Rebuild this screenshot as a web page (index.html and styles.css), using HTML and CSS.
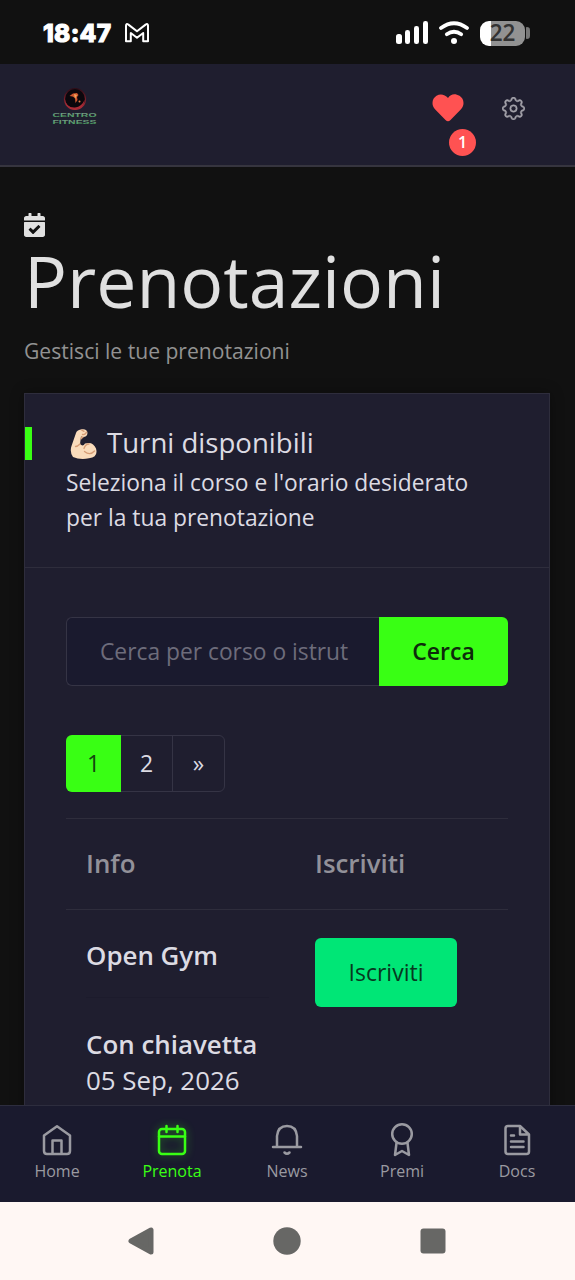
FILE: index.html
```html
<!DOCTYPE html>
<html lang="it">
<head>
<meta charset="utf-8">
<title>Prenotazioni</title>
<link rel="stylesheet" href="styles.css">
</head>
<body>
<div class="screen">
  <div class="status">
    <span class="clock">18:47</span>
    <svg class="gmail" width="26" height="22" viewBox="0 0 26 22"><path d="M2 19.200V3.800Q2 1.200 4.400 2.600L13 9.300 21.600 2.600Q24 1.200 24 3.800V19.200H19.200V11L13 15.800 6.800 11V19.200Z" fill="none" stroke="#fff" stroke-width="2" stroke-linejoin="round"/></svg>
    <svg class="signal" width="34" height="24" viewBox="0 0 34 24" fill="#fff"><rect x="0" y="13" width="6" height="10" rx="2.500"/><rect x="9" y="9" width="5" height="14" rx="2.300"/><rect x="18" y="5" width="5" height="18" rx="2.300"/><rect x="27" y="0" width="5" height="23" rx="2.300"/></svg>
    <svg class="wifi" width="32" height="24" viewBox="0 0 32 24"><g fill="none" stroke="#fff" stroke-width="3.800" stroke-linecap="round"><path d="M3 7Q16-2.500 29 7"/><path d="M8.800 13.200Q16 8.200 23.200 13.200"/></g><circle cx="16" cy="20" r="3" fill="#fff"/></svg>
    <div class="battery"><span class="battery-body">22</span><span class="battery-tip"></span></div>
  </div>

  <header class="topbar">
    <svg class="logo" width="50" height="40" viewBox="0 0 50 40">
      <defs>
        <linearGradient id="g" x1="0" y1="0" x2="0" y2="1"><stop offset=".3" stop-color="#6f9a80"/><stop offset="1" stop-color="#41a659"/></linearGradient>
        <linearGradient id="r" x1="0" y1="0" x2="0" y2="1"><stop offset="0" stop-color="#300d18"/><stop offset="1" stop-color="#b52f3b"/></linearGradient>
      </defs>
      <circle cx="25" cy="12" r="10.500" fill="#0b070c" stroke="url(#r)" stroke-width="1.200"/>
      <path d="M14.500 11Q16 21 25 20.500Q32 19.500 34.500 13Q34 22 25 22.500Q15 22 14.500 11Z" fill="#a92c36"/>
      <path d="M19.500 9L23 6.500 27 6 28.500 8 27 10 27.500 13 25.500 16 25 11 22.500 9.500Z" fill="#cf572e"/>
      <path d="M24 7l3 1-2 4z" fill="#f0a65b"/><circle cx="29.500" cy="14.500" r="1" fill="#e27a45"/>
      <g class="logo-text" fill="url(#g)">
        <text x="2.500" y="29.800" textLength="44" lengthAdjust="spacingAndGlyphs">CENTRO</text>
        <text x="2.500" y="36.800" textLength="44" lengthAdjust="spacingAndGlyphs">FITNESS</text>
      </g>
    </svg>
    <div class="hearts">
      <svg width="32" height="28" viewBox="0 0 32 28"><path d="M16 27.300Q14.800 27.300 13.500 26L3 15.300C-1 11 0 4.500 4.500 1.800 8.500-.5 13 .7 16 4 19-.7 23.500-.5 27.500 1.800 32 4.500 33 11 29 15.300L18.500 26Q17.200 27.300 16 27.300Z" fill="#ff5252"/></svg>
      <span class="badge">1</span>
    </div>
    <svg class="gear" width="23" height="23" viewBox="0 0 16 16" fill="#a2a1a9" stroke="#a2a1a9" stroke-width=".35"><path d="M8 5.400a2.600 2.600 0 1 0 0 5.200 2.600 2.600 0 0 0 0-5.200M6.300 8a1.700 1.700 0 1 1 3.400 0 1.700 1.700 0 0 1-3.400 0"/><path d="M9.796 1.343c-.527-1.790-3.065-1.790-3.592 0l-.094.319a.873.873 0 0 1-1.255.520l-.292-.160c-1.640-.892-3.433.902-2.540 2.541l.159.292a.873.873 0 0 1-.520 1.255l-.319.094c-1.790.527-1.790 3.065 0 3.592l.319.094a.873.873 0 0 1 .520 1.255l-.160.292c-.892 1.640.901 3.434 2.541 2.540l.292-.159a.873.873 0 0 1 1.255.520l.094.319c.527 1.790 3.065 1.790 3.592 0l.094-.319a.873.873 0 0 1 1.255-.520l.292.160c1.640.893 3.434-.902 2.540-2.541l-.159-.292a.873.873 0 0 1 .520-1.255l.319-.094c1.790-.527 1.790-3.065 0-3.592l-.319-.094a.873.873 0 0 1-.520-1.255l.160-.292c.893-1.640-.902-3.433-2.541-2.540l-.292.159a.873.873 0 0 1-1.255-.520zm-2.633.283c.246-.835 1.428-.835 1.674 0l.094.319a1.873 1.873 0 0 0 2.693 1.115l.291-.160c.764-.415 1.600.420 1.184 1.185l-.159.292a1.873 1.873 0 0 0 1.116 2.692l.318.094c.835.246.835 1.428 0 1.674l-.319.094a1.873 1.873 0 0 0-1.115 2.693l.160.291c.415.764-.420 1.600-1.185 1.184l-.291-.159a1.873 1.873 0 0 0-2.693 1.116l-.094.318c-.246.835-1.428.835-1.674 0l-.094-.319a1.873 1.873 0 0 0-2.692-1.115l-.292.160c-.764.415-1.600-.420-1.184-1.185l.159-.291A1.873 1.873 0 0 0 1.945 8.930l-.319-.094c-.835-.246-.835-1.428 0-1.674l.319-.094A1.873 1.873 0 0 0 3.060 4.377l-.160-.292c-.415-.764.420-1.600 1.185-1.184l.292.159a1.873 1.873 0 0 0 2.692-1.115z"/></svg>
  </header>

  <main class="content">
    <svg class="title-icon" width="21" height="24" viewBox="0 0 448 512" preserveAspectRatio="none" fill="#e0e0e0"><path d="M436 160H12c-6.600 0-12-5.400-12-12v-36c0-26.500 21.500-48 48-48h48V12c0-6.600 5.400-12 12-12h40c6.600 0 12 5.400 12 12v52h128V12c0-6.600 5.400-12 12-12h40c6.600 0 12 5.400 12 12v52h48c26.500 0 48 21.500 48 48v36c0 6.600-5.400 12-12 12zM12 192h424c6.600 0 12 5.400 12 12v260c0 26.500-21.500 48-48 48H48c-26.500 0-48-21.500-48-48V204c0-6.600 5.400-12 12-12zm333.300 95.900l-28.200-28.400c-4.700-4.700-12.300-4.700-17-.1l-106 105.200-46-46.400c-4.700-4.700-12.300-4.700-17-.1l-28.400 28.200c-4.700 4.700-4.700 12.300-.1 17l82.600 83.300c4.700 4.700 12.300 4.700 17 .1l142.900-141.800c4.700-4.700 4.700-12.300.1-17z"/></svg>
    <h1 class="title">Prenotazioni</h1>
    <p class="subtitle">Gestisci le tue prenotazioni</p>

    <section class="card">
      <div class="card-head">
        <h2 class="card-title">
          <svg width="27" height="30" viewBox="0 0 27 30"><path d="M3 28Q-.5 23 1.500 17L6 4Q7 1 12 .3 17-.3 17.500 4 17.300 8 13 8L11 7.500 10 15Q13 18 15 14.500 23 12 26 19.500 28.500 28 19 29.300 10 31 3 28Z" fill="#fadcbc"/><path d="M10 15Q7.500 17.500 5.500 17.500M11.500 1L14 2.300M12.500 5.500Q15.500 6 16.500 3M14 19.500Q15.500 15 19 15M14.500 22.500Q20 27 24.500 22" fill="none" stroke="#d69d76" stroke-width="1.300" stroke-linecap="round"/><path d="M11 7.500L14 8 10.700 11Z" fill="#d69d76"/></svg>
          <span>Turni disponibili</span>
        </h2>
        <p class="card-text">Seleziona il corso e l'orario desiderato<br>per la tua prenotazione</p>
      </div>
      <div class="card-body">
        <div class="search">
          <div class="search-field"><span>Cerca per corso o istrut</span></div>
          <button class="search-btn"><span>Cerca</span></button>
        </div>
        <div class="pages"><span class="page active">1</span><span class="page two">2</span><span class="page next">»</span></div>
        <div class="table">
          <div class="row head"><span class="col">Info</span><span class="col">Iscriviti</span></div>
          <div class="row">
            <div class="col info">
              <strong class="line">Open Gym</strong>
              <hr class="rule">
              <strong class="line">Con chiavetta</strong>
              <span class="line">05 Sep, 2026</span>
            </div>
            <div class="col"><button class="join">Iscriviti</button></div>
          </div>
        </div>
      </div>
    </section>
  </main>

  <nav class="tabs">
    <a class="tab"><svg class="ico" viewBox="0 0 32 32"><path d="M3 11.500L16 2.200 29 11.500V27Q29 30 26 30H6Q3 30 3 27ZM11.500 30V16.500H20.500V30"/></svg><span>Home</span></a>
    <a class="tab on"><svg class="ico" viewBox="0 0 32 32"><rect x="3" y="5" width="26" height="25" rx="3"/><path d="M3 12.500H29M10.500 2V8M21.500 2V8"/></svg><span>Prenota</span></a>
    <a class="tab"><svg class="ico" viewBox="0 0 32 32"><path d="M2 23H30M6 23V12Q7 2 16 2T26 12V23M13.500 28.500Q16 31 18.500 28.500"/></svg><span>News</span></a>
    <a class="tab"><svg class="ico" viewBox="0 0 32 32"><circle cx="16" cy="10" r="9.800"/><path d="M10.500 19L9 31 16 27 23 31 21.500 19"/></svg><span>Premi</span></a>
    <a class="tab"><svg class="ico" viewBox="0 0 32 32"><path d="M19 2H7Q4.500 2 4.500 4.500V27.500Q4.500 30 7 30H25.500Q28 30 28 27.500V10.500ZM19 2V10.500H28M10 11.500H13M10 17.500H22.500M10 23H22.500"/></svg><span>Docs</span></a>
  </nav>

  <div class="sysbar">
    <svg width="28" height="30" viewBox="0 0 28 30"><path d="M4 15L24 4V26Z" fill="#676765" stroke="#676765" stroke-width="5" stroke-linejoin="round"/></svg>
    <svg width="28" height="28" viewBox="0 0 28 28"><circle cx="14" cy="14" r="13.700" fill="#676765"/></svg>
    <svg width="28" height="28" viewBox="0 0 28 28"><rect x="1.500" y="1.500" width="25" height="25" rx="3" fill="#676765"/></svg>
  </div>
</div>
</body>
</html>
```
FILE: styles.css
```css
* { box-sizing: border-box; }
body { margin: 0; background: #111; color: #dcdbe3; font-family: "Open Sans", "Noto Sans", sans-serif; }
h1, h2, p { margin: 0; font-weight: 400; }
svg { display: block; flex: none; }
button { border: 0; padding: 0; font: inherit; }
.screen { width: 575px; height: 1280px; display: flex; flex-direction: column; overflow: hidden; white-space: nowrap; }

.status { height: 64px; flex: none; display: flex; align-items: center; padding: 2px 45px 0 43px; background: #111; }
.clock { width: 69px; font: 800 24.500px/30px Inter, sans-serif; color: #fff; -webkit-text-stroke: 1px #fff; letter-spacing: .3px; }
.gmail { margin-left: 12px; }
.signal { margin-left: auto; }
.wifi { margin-left: 8px; }
.battery { display: flex; align-items: center; gap: 1px; margin-left: 10px; }
.battery-body { width: 45px; height: 25px; border-radius: 9px; background: linear-gradient(90deg, #fff 11px, #929292 11px); color: #333; font: 600 22.500px/23px "Open Sans", sans-serif; text-align: center; }
.battery-tip { width: 4px; height: 12px; border-radius: 1px 4px 4px 1px; background: #777; }

.topbar { height: 103px; flex: none; display: flex; align-items: flex-start; padding: 0 50px; background: #1f1e2f; border-bottom: 2px solid #36353f; }
.logo { margin-top: 23px; }
.logo-text { font: 700 6px "Liberation Sans", sans-serif; }
.hearts { margin: 30px 0 0 auto; width: 44px; }
.badge { display: block; width: 27px; height: 27px; margin: 7px 0 0 17px; border-radius: 50%; background: #ff5252; color: #fff; font-size: 16px; font-weight: 600; line-height: 27px; text-align: center; }
.gear { margin: 32.500px .5px 0 25.500px; }

.content { flex: 1; min-height: 0; overflow: hidden; padding: 46px 25px 0 24px; }
.title { margin-top: 1px; height: 86px; font-size: 71.500px; line-height: 86px; color: #e0e0e0; }
.subtitle { margin-top: 10px; height: 33px; font-size: 21.100px; line-height: 33px; color: #929292; }
.card { margin-top: 26px; border: 1px solid #2e2d3c; background: #1f1e2f; height: 900px; box-shadow: 0 0 12px rgba(0, 0, 0, .35); }
.card-head { height: 174px; border-bottom: 1px solid #2e2d3c; padding-top: 33px; }
.card-title { display: flex; align-items: center; height: 33px; border-left: 7px solid #39ff14; padding-left: 38px; font-size: 27.600px; line-height: 33px; }
.card-title span { margin: -2px 0 0 10px; }
.card-text { margin-top: 6px; padding-left: 41px; font-size: 22.800px; line-height: 34.500px; }
.card-body { padding: 50px 41px 0; margin-top: -1px; }

.search { display: flex; height: 69px; }
.search-field { width: 313px; border: 1px solid #353445; border-right: 0; border-radius: 6px 0 0 6px; background: #1a1a2e; padding-left: 33px; color: #6d6c7b; font-size: 22.800px; line-height: 68px; }
.search-btn { flex: 1; border-radius: 0 6px 6px 0; background: #39ff14; color: #0d2b0b; font-size: 23px; font-weight: 600; padding-bottom: 2px; }
.pages { display: flex; width: 159px; height: 57px; margin-top: 49px; border-radius: 6px; border: 1px solid #353445; font-size: 23px; line-height: 54px; text-align: center; color: #dcdbe3; }
.page.active { width: 55px; margin: -1px 0 -1px -1px; border-radius: 6px 0 0 6px; background: #39ff14; color: #14440f; line-height: 56px; }
.page.two { width: 52px; border-right: 1px solid #353445; }
.page.next { flex: 1; }

.table { margin-top: 26px; border-top: 1px solid #2e2d3c; font-size: 25.900px; line-height: 36px; }
.row { display: grid; grid-template-columns: 229px 1fr; padding: 28px 0 0 20px; }
.row.head { height: 91px; padding-top: 26px; border-bottom: 1px solid #2e2d3c; color: #929199; font-weight: 600; }
.info { display: flex; flex-direction: column; align-items: flex-start; }
.info .line { height: 36px; margin-top: -1px; margin-bottom: 1px; }
strong { font-weight: 600; }
.rule { width: 183px; height: 1px; margin: 23px 0 29px; border: 0; background: #1c1b2c; }
.join { width: 142px; height: 69px; border-radius: 6px; background: #00e676; color: #07391f; font-size: 23px; padding-bottom: 2px; }

.tabs { height: 97px; flex: none; display: grid; grid-template-columns: repeat(5, 1fr); border-top: 1px solid #2d2d3e; background: #1a1a2e; }
.tab { display: flex; flex-direction: column; align-items: center; padding: 18px 1px 0 0; color: #9a9aa1; font-size: 16px; line-height: 24px; }
.tab span { margin-top: 3px; }
.ico { width: 32px; height: 32px; fill: none; stroke: currentColor; stroke-width: 2.500; stroke-linecap: round; stroke-linejoin: round; overflow: visible; }
.tab.on { color: #39ff14; }
.tab.on .ico { filter: drop-shadow(0 0 4px rgba(57, 255, 20, .4)); }
.sysbar { height: 78px; flex: none; display: flex; align-items: center; justify-content: center; gap: 118px; padding-right: 2px; background: #fff7f4; }
```
